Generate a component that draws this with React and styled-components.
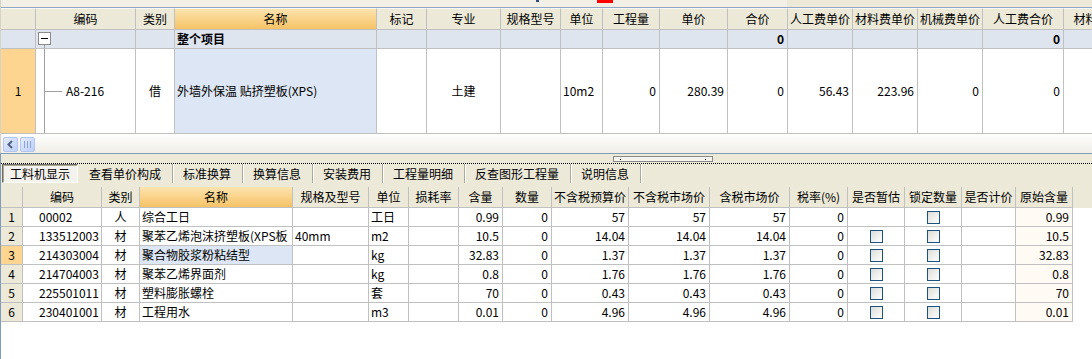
import React from 'react';
import styled, { createGlobalStyle, css } from 'styled-components';

// ---------- global ----------

const GlobalStyle = createGlobalStyle`
  html, body { margin: 0; padding: 0; background: #fff; overflow: hidden; }
  body {
    font-family: "Noto Sans CJK SC", "Liberation Sans", sans-serif;
    font-size: 12px;
    color: #000;
  }
  * { box-sizing: border-box; }
`;

const LINE = '#C0C0C0';
const BEIGE = '#ECE9D8';
const XP_BLUE = '#7F9DB9';

// ---------- layout ----------

const Window = styled.div`
  width: 1092px;
  height: 359px;
  display: flex;
  flex-direction: column;
  overflow: hidden;
  background: #fff;
`;

const TopPane = styled.div`
  flex: none;
  border-left: 1px solid #D6D3C6;
  overflow: hidden;
`;

const Strip = styled.div`
  height: 8px;
  display: flex;
  align-items: flex-start;
  border-bottom: 1px solid #8FA6C4;
  background: linear-gradient(to right, #F2F0E6 786px, ${BEIGE} 786px);
`;

const StripMark = styled.span`
  flex: none;
  margin-left: ${p => p.$ml}px;
  width: ${p => p.$w}px;
  height: ${p => p.$h}px;
  background: ${p => p.$c};
`;

const Grid = styled.div`
  display: grid;
  grid-template-columns: ${p => p.$cols};
  grid-template-rows: ${p => p.$rows};
  width: ${p => (p.$fill ? '100%' : 'max-content')};
`;

const Cell = styled.div`
  display: flex;
  align-items: center;
  justify-content: ${p =>
    p.$align === 'right' ? 'flex-end' : p.$align === 'center' ? 'center' : 'flex-start'};
  padding: 0 ${p => (p.$pad ?? 3)}px;
  border-right: 1px solid ${LINE};
  border-bottom: 1px solid ${LINE};
  background: ${p => p.$bg || '#fff'};
  font-weight: ${p => (p.$bold ? 700 : 400)};
  white-space: nowrap;
  overflow: hidden;
  line-height: 16px;
`;

const HeadCell = styled(Cell)`
  justify-content: center;
  padding: 0;
  border-top: ${p => (p.$top ? '1px solid #F8F7F1' : 'none')};
  background: ${p => (p.$hot ? 'linear-gradient(#FCE3AE, #F6C366)' : BEIGE)};
`;

const RowNum = styled(Cell)`
  justify-content: center;
  padding: 0;
  background: ${p => (p.$hot ? '#FDD490' : BEIGE)};
`;

const Filler = styled.div`
  background: ${p => (p.$head ? BEIGE : '#fff')};
`;

// tree bits in the code column
const Node = styled.div`
  align-self: stretch;
  width: 13px;
  margin-left: 2px;
  display: flex;
  flex-direction: column;
  align-items: center;
  justify-content: flex-end;
  &::after { content: ''; width: 1px; height: 3px; background: #A0A0A0; }
`;

const ExpandBox = styled.span`
  width: 13px;
  height: 13px;
  border: 1px solid #8C8C8C;
  background: #fff;
  display: flex;
  align-items: center;
  justify-content: center;
  &::before { content: ''; width: 7px; height: 1px; background: #000; }
`;

const TreeLine = styled.div`
  align-self: stretch;
  width: 18px;
  margin-left: 8px;
  margin-right: 4px;
  display: flex;
  align-items: center;
  border-left: 1px solid #A0A0A0;
  &::after { content: ''; width: 100%; height: 1px; background: #A0A0A0; }
`;

// ---------- scroll bar ----------

const ScrollTrack = styled.div`
  flex: none;
  height: 19px;
  display: flex;
  gap: 2px;
  padding: 3px 0 1px 2px;
  background: linear-gradient(#FEFEFD, #EFEEE7);
  border-left: 1px solid #D6D3C6;
`;

const ScrollBtn = styled.div`
  width: 15px;
  height: 15px;
  border: 1px solid #B3C6F2;
  border-radius: 2px;
  background: linear-gradient(135deg, #E4ECFE, #BDD0F9);
  display: flex;
  align-items: center;
  justify-content: center;
`;

// ---------- lower pane ----------

const BottomPane = styled.div`
  flex: 1;
  display: flex;
  flex-direction: column;
  border-top: 1px solid ${XP_BLUE};
  border-left: 1px solid ${XP_BLUE};
  background: #fff;
`;

const SplitBar = styled.div`
  height: 9px;
  padding-top: 2px;
  background: ${BEIGE};
  display: flex;
`;

const Handle = styled.div`
  margin-left: 612px;
  width: 100px;
  height: 6px;
  border: 1px solid #8A8A8A;
  background: #F4F3EE;
  display: flex;
  align-items: center;
  justify-content: space-between;
  padding: 0 6px;
  &::before, &::after { content: ''; width: 1px; height: 1px; background: #000; }
`;

const TabBar = styled.div`
  height: 24px;
  display: flex;
  padding: 0 0 4px 1px;
  border-top: 1px dotted #000;
  background: ${BEIGE};
`;

const Tab = styled.div`
  display: flex;
  align-items: center;
  padding: 0 11px 0 10px;
  border-right: 1px solid #ACA899;
  box-shadow: 1px 0 0 #FFFFFF;
  white-space: nowrap;
  ${p => p.$active && css`
    padding: 0 7px;
    margin-right: 1px;
    border: 1px solid;
    border-color: #6F6D63 #FFFFFF #FFFFFF #6F6D63;
    box-shadow: inset 1px 1px 0 #ACA899;
    background: #F3F2EC;
  `}
`;

const Check = styled.span`
  width: 13px;
  height: 13px;
  border: 1px solid #1C5180;
  background: linear-gradient(135deg, #DCDCD7, #FFFFFF);
`;

// ---------- data ----------

const topCols = [
  { w: 35, label: '' },
  { w: 100, label: '编码' },
  { w: 39, label: '类别' },
  { w: 202, label: '名称', hot: true },
  { w: 50, label: '标记' },
  { w: 74, label: '专业' },
  { w: 60, label: '规格型号' },
  { w: 42, label: '单位' },
  { w: 57, label: '工程量' },
  { w: 68, label: '单价' },
  { w: 60, label: '合价' },
  { w: 65, label: '人工费单价' },
  { w: 65, label: '材料费单价' },
  { w: 65, label: '机械费单价' },
  { w: 81, label: '人工费合价' },
  { w: 80, label: '材料费合价' },
];

const bottomCols = [
  { w: 22, label: '' },
  { w: 79, label: '编码' },
  { w: 38, label: '类别' },
  { w: 153, label: '名称', hot: true },
  { w: 76, label: '规格及型号' },
  { w: 40, label: '单位' },
  { w: 50, label: '损耗率' },
  { w: 44, label: '含量' },
  { w: 49, label: '数量' },
  { w: 77, label: '不含税预算价' },
  { w: 81, label: '不含税市场价' },
  { w: 80, label: '含税市场价' },
  { w: 58, label: '税率(%)' },
  { w: 57, label: '是否暂估' },
  { w: 57, label: '锁定数量' },
  { w: 54, label: '是否计价' },
  { w: 57, label: '原始含量' },
];

const materials = [
  { code: '00002', type: '人', name: '综合工日', spec: '', unit: '工日', qty: '0.99', price: '57', est: false },
  { code: '133512003', type: '材', name: '聚苯乙烯泡沫挤塑板(XPS板', spec: '40mm', unit: 'm2', qty: '10.5', price: '14.04', est: true },
  { code: '214303004', type: '材', name: '聚合物胶浆粉粘结型', spec: '', unit: 'kg', qty: '32.83', price: '1.37', est: true },
  { code: '214704003', type: '材', name: '聚苯乙烯界面剂', spec: '', unit: 'kg', qty: '0.8', price: '1.76', est: true },
  { code: '225501011', type: '材', name: '塑料膨胀螺栓', spec: '', unit: '套', qty: '70', price: '0.43', est: true },
  { code: '230401001', type: '材', name: '工程用水', spec: '', unit: 'm3', qty: '0.01', price: '4.96', est: true },
];

const tabs = ['工料机显示', '查看单价构成', '标准换算', '换算信息', '安装费用', '工程量明细', '反查图形工程量', '说明信息'];

const GROUP = '#DEE5EF';
const PICK = '#DCE6F4';

// ---------- component ----------

export default function App() {
  const topTemplate = topCols.map(c => `${c.w}px`).join(' ');
  const bottomTemplate = bottomCols.map(c => `${c.w}px`).join(' ') + ' 1fr';
  const selectedRow = 3;

  return (
    <Window>
      <GlobalStyle />

      <TopPane>
        <Strip>
          <StripMark $ml={535} $w={3} $h={2} $c="#2F4F7F" />
          <StripMark $ml={58} $w={16} $h={3} $c="#FF0000" />
        </Strip>

        <Grid $cols={topTemplate} $rows="22px 19px 85px">
          {topCols.map((c, i) => (
            <HeadCell key={'h' + i} $hot={c.hot} $top>{c.label}</HeadCell>
          ))}

          <Cell $bg={GROUP} />
          <Cell $bg={GROUP} $pad={0}><Node><ExpandBox /></Node></Cell>
          <Cell $bg={GROUP} />
          <Cell $bg={GROUP} $pad={2} $bold>整个项目</Cell>
          <Cell $bg={GROUP} />
          <Cell $bg={GROUP} />
          <Cell $bg={GROUP} />
          <Cell $bg={GROUP} />
          <Cell $bg={GROUP} />
          <Cell $bg={GROUP} />
          <Cell $bg={GROUP} $align="right" $bold>0</Cell>
          <Cell $bg={GROUP} />
          <Cell $bg={GROUP} />
          <Cell $bg={GROUP} />
          <Cell $bg={GROUP} $align="right" $bold>0</Cell>
          <Cell $bg={GROUP} />

          <RowNum $hot>1</RowNum>
          <Cell $pad={0}><TreeLine />A8-216</Cell>
          <Cell $align="center">借</Cell>
          <Cell $pad={2} $bg={PICK}>外墙外保温 贴挤塑板(XPS)</Cell>
          <Cell />
          <Cell $align="center">土建</Cell>
          <Cell />
          <Cell $pad={2}>10m2</Cell>
          <Cell $align="right">0</Cell>
          <Cell $align="right">280.39</Cell>
          <Cell $align="right">0</Cell>
          <Cell $align="right">56.43</Cell>
          <Cell $align="right">223.96</Cell>
          <Cell $align="right">0</Cell>
          <Cell $align="right">0</Cell>
          <Cell />
        </Grid>
      </TopPane>

      <ScrollTrack>
        <ScrollBtn>
          <svg width="9" height="9" viewBox="0 0 9 9">
            <polyline points="6,1 2.5,4.5 6,8" fill="none" stroke="#4D6185" strokeWidth="2" />
          </svg>
        </ScrollBtn>
        <ScrollBtn>
          <svg width="7" height="7" viewBox="0 0 7 7">
            <g stroke="#8AA4DC" strokeWidth="1">
              <line x1="0.5" y1="0" x2="0.5" y2="7" />
              <line x1="3.5" y1="0" x2="3.5" y2="7" />
              <line x1="6.5" y1="0" x2="6.5" y2="7" />
            </g>
          </svg>
        </ScrollBtn>
      </ScrollTrack>

      <BottomPane>
        <SplitBar><Handle /></SplitBar>

        <TabBar>
          {tabs.map((t, i) => (
            <Tab key={t} $active={i === 0}>{t}</Tab>
          ))}
        </TabBar>

        <Grid $fill $cols={bottomTemplate} $rows="21px repeat(6, 19px)">
          {bottomCols.map((c, i) => (
            <HeadCell key={'bh' + i} $hot={c.hot}>{c.label}</HeadCell>
          ))}
          <Filler $head />

          {materials.map((m, i) => {
            const no = i + 1;
            const hot = no === selectedRow;
            return (
              <React.Fragment key={m.code}>
                <RowNum $hot={hot}>{no}</RowNum>
                <Cell $pad={16}>{m.code}</Cell>
                <Cell $align="center">{m.type}</Cell>
                <Cell $pad={2} $bg={hot ? PICK : undefined}>{m.name}</Cell>
                <Cell $pad={2}>{m.spec}</Cell>
                <Cell $pad={2}>{m.unit}</Cell>
                <Cell />
                <Cell $align="right">{m.qty}</Cell>
                <Cell $align="right">0</Cell>
                <Cell $align="right">{m.price}</Cell>
                <Cell $align="right">{m.price}</Cell>
                <Cell $align="right">{m.price}</Cell>
                <Cell $align="right">0</Cell>
                <Cell $align="center">{m.est && <Check />}</Cell>
                <Cell $align="center"><Check /></Cell>
                <Cell />
                <Cell $align="right" $bg="#FFFAF3">{m.qty}</Cell>
                <Filler />
              </React.Fragment>
            );
          })}
        </Grid>
      </BottomPane>
    </Window>
  );
}
